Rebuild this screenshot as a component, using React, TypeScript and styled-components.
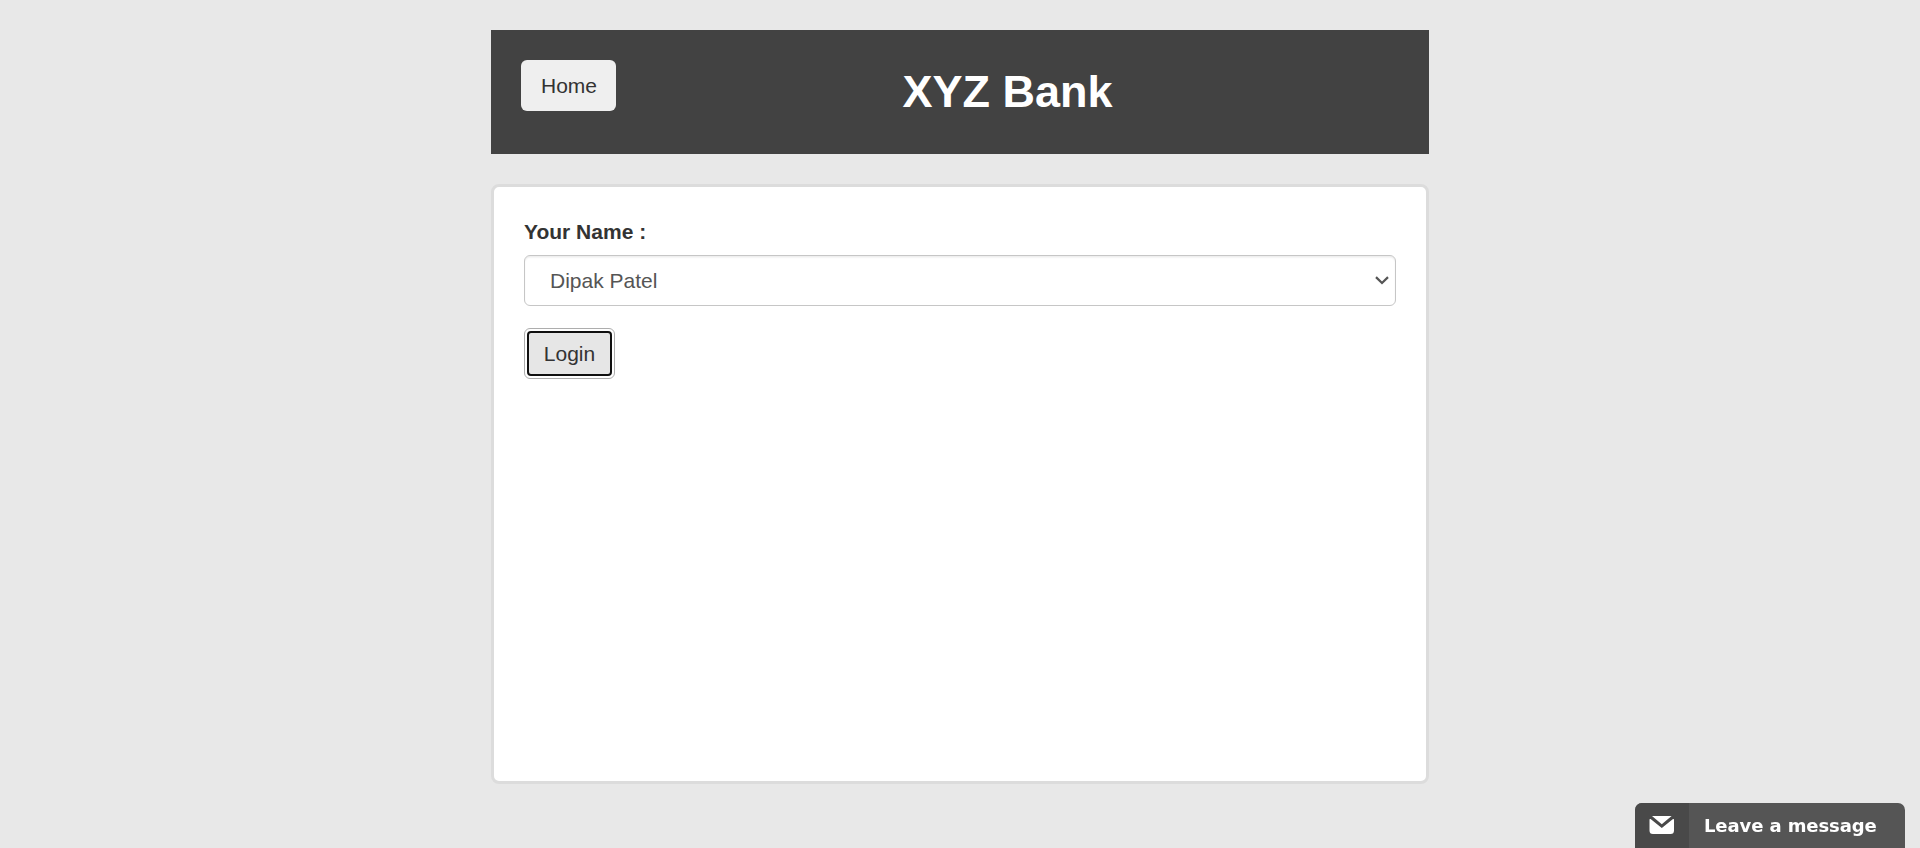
import React from "react";
import styled, { createGlobalStyle } from "styled-components";

const GlobalStyle = createGlobalStyle`
  *, *::before, *::after { box-sizing: border-box; }
  html, body, #root { height: 100%; }
  body {
    margin: 0;
    overflow: hidden;
    background: #e8e8e8;
    color: #333;
    font: 21px/30px "Liberation Sans", Arial, sans-serif;
  }
`;

const Page = styled.div`
  width: 938px;
  margin: 0 auto;
  padding-top: 30px;
  display: flex;
  flex-direction: column;
  gap: 30px;
`;

const Header = styled.header`
  height: 124px;
  padding: 30px;
  display: flex;
  align-items: flex-start;
  background: #424242;
`;

const HomeButton = styled.button`
  width: 95px;
  height: 51px;
  padding: 0 0 0 1px;
  border: 0;
  border-radius: 6px;
  background: #efefef;
  color: #333;
  font: inherit;
`;

const Title = styled.h1`
  flex: 1;
  margin: 7px 0 0;
  color: #fff;
  font-size: 45px;
  line-height: 50px;
  font-weight: 700;
  text-align: center;
`;

const Panel = styled.main`
  height: 600px;
  padding: 30px;
  border: 3px solid #dcdcdc;
  border-radius: 8px;
  background: #fff;
`;

const Form = styled.form`
  display: flex;
  flex-direction: column;
  align-items: flex-start;
`;

const Label = styled.label`
  height: 30px;
  margin-bottom: 8px;
  font-weight: 700;
`;

const SelectBox = styled.div`
  width: 100%;
  height: 51px;
  margin-bottom: 22px;
  padding: 0 5px 0 25px;
  display: flex;
  align-items: center;
  justify-content: space-between;
  border: 1px solid #c6c6c6;
  border-radius: 6px;
  box-shadow: inset 0 1.5px 1.5px rgba(0, 0, 0, 0.075);
  color: #555;
`;

const LoginButton = styled.button`
  width: 91px;
  height: 51px;
  padding: 2px;
  border: 1px solid #adadad;
  border-radius: 6px;
  background: #fff;
  color: #333;
  font: inherit;
`;

const LoginFace = styled.span`
  height: 45px;
  display: flex;
  align-items: center;
  justify-content: center;
  border: 2px solid #101010;
  border-radius: 4px;
  background: #e6e6e6;
`;

const ChatTab = styled.aside`
  position: fixed;
  right: 15px;
  bottom: 0;
  width: 270px;
  height: 45px;
  display: flex;
  overflow: hidden;
  border-radius: 7px 7px 0 0;
  background: #555;
  color: #fff;
`;

const ChatIcon = styled.div`
  width: 54px;
  padding: 13px 0 0 14px;
  background: #494949;
  line-height: 0;
`;

const ChatText = styled.div`
  padding: 8px 0 0 15px;
  font: 700 18px/30px "DejaVu Sans", Verdana, sans-serif;
  letter-spacing: -0.1px;
  white-space: nowrap;
`;

export default function App() {
  return (
    <>
      <GlobalStyle />
      <Page>
        <Header>
          <HomeButton type="button">Home</HomeButton>
          <Title>XYZ Bank</Title>
        </Header>
        <Panel>
          <Form onSubmit={(e) => e.preventDefault()}>
            <Label>Your Name :</Label>
            <SelectBox>
              <span>Dipak Patel</span>
              <svg width="16" height="10" viewBox="0 0 16 10" fill="none" stroke="#555" strokeWidth="2.2">
                <path d="M2 1.1 8 7 14 1.1" />
              </svg>
            </SelectBox>
            <LoginButton type="submit">
              <LoginFace>Login</LoginFace>
            </LoginButton>
          </Form>
        </Panel>
      </Page>
      <ChatTab>
        <ChatIcon>
          <svg width="26" height="18" viewBox="0 0 26 18" fill="#fff">
            <path d="M3 0H22.6L12.8 8.2Z" />
            <path d="M0.5 3.6Q0.5 2.6 1.6 3L12.8 12 24 3Q25 2.6 25 3.6V14.5Q25 18 21.6 18H3.9Q0.5 18 0.5 14.5Z" />
          </svg>
        </ChatIcon>
        <ChatText>Leave a message</ChatText>
      </ChatTab>
    </>
  );
}
